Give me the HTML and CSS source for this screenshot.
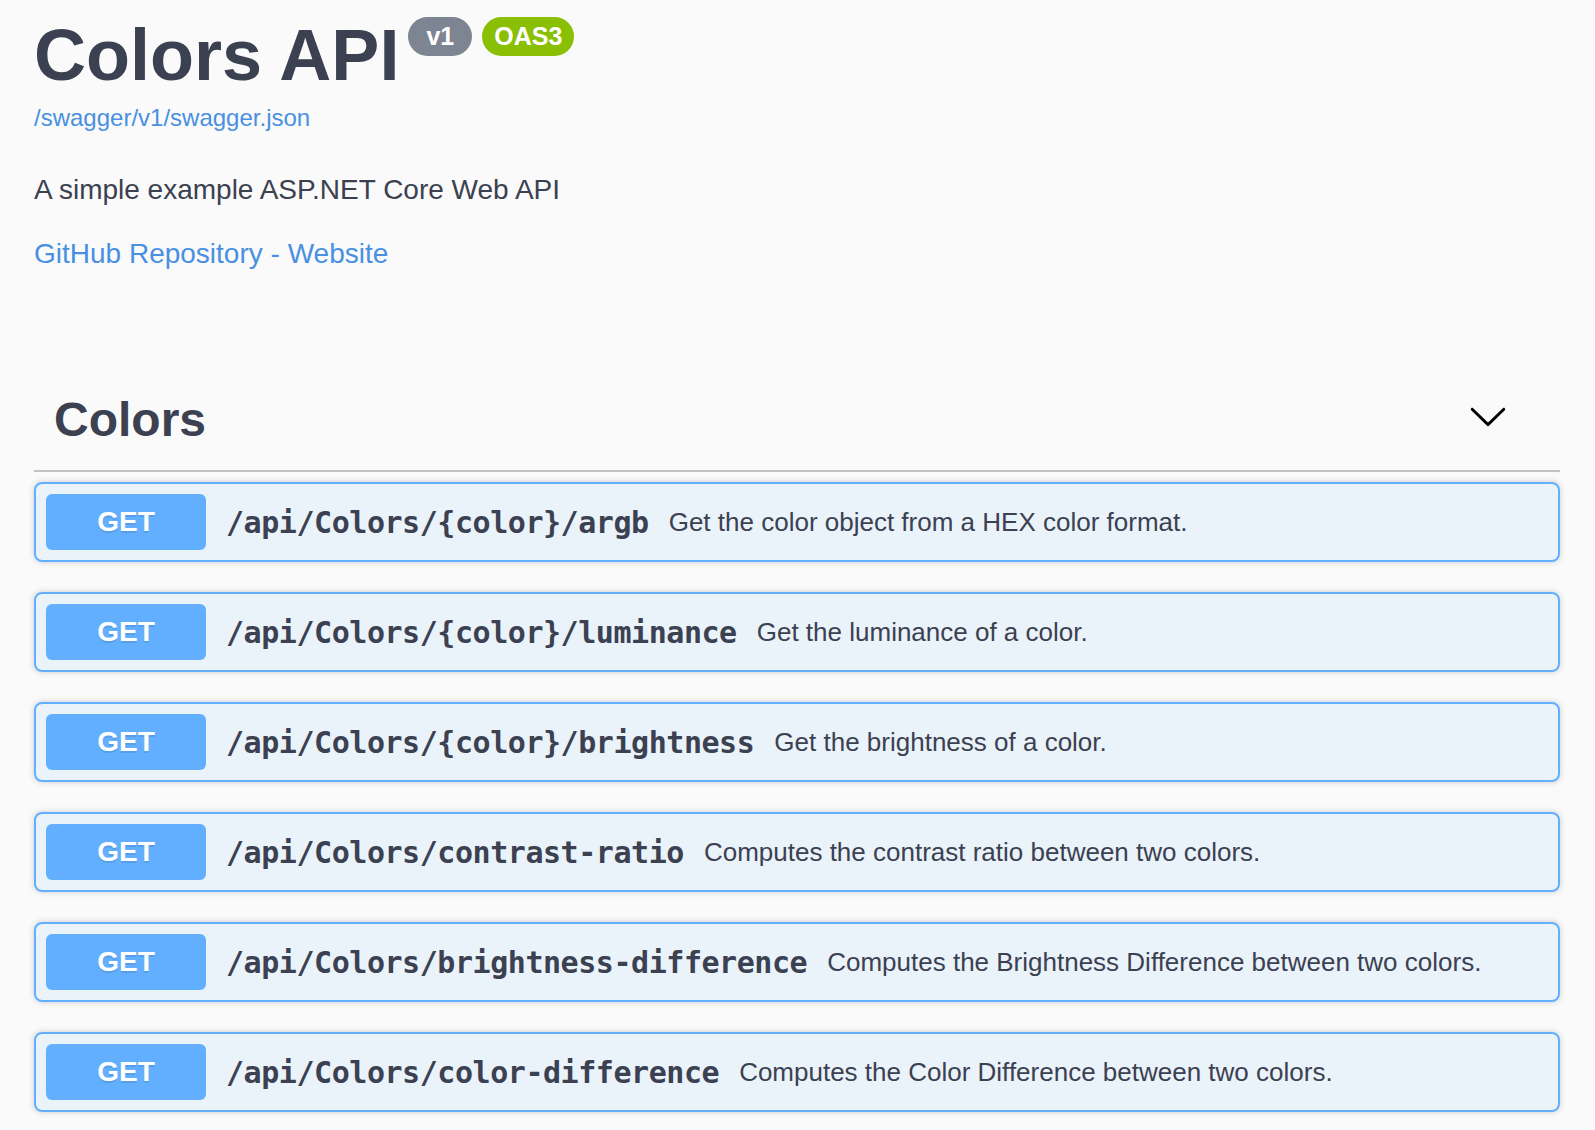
FILE: index.html
```html
<!DOCTYPE html>
<html lang="en">
<head>
<meta charset="utf-8">
<title>Colors API</title>
<link rel="stylesheet" href="styles.css">
</head>
<body>
<div class="wrapper">
  <section class="info">
    <div class="title-row">
      <h2 class="title">Colors API</h2>
      <div class="badges">
        <small class="badge badge-version">v1</small>
        <small class="badge badge-oas">OAS3</small>
      </div>
    </div>
    <a class="spec-link" href="#">/swagger/v1/swagger.json</a>
    <p class="description">A simple example ASP.NET Core Web API</p>
    <p class="contact"><a href="#">GitHub Repository - Website</a></p>
  </section>

  <section class="tag-section">
    <div class="opblock-tag">
      <h3 class="tag-name">Colors</h3>
      <button class="expand" type="button" aria-label="collapse">
        <svg viewBox="0 0 20 20" width="40" height="40"><path d="M17.418 6.109c.272-.268.709-.268.979 0s.271.701 0 .969l-7.908 7.830c-.27.268-.707.268-.979 0l-7.908-7.830c-.27-.268-.27-.701 0-.969.271-.268.709-.268.979 0L10 13.250l7.418-7.141z" fill="#000"/></svg>
      </button>
    </div>

    <div class="opblock">
      <span class="method">GET</span>
      <span class="path">/api/Colors/{color}/argb</span>
      <span class="summary">Get the color object from a HEX color format.</span>
    </div>
    <div class="opblock">
      <span class="method">GET</span>
      <span class="path">/api/Colors/{color}/luminance</span>
      <span class="summary">Get the luminance of a color.</span>
    </div>
    <div class="opblock">
      <span class="method">GET</span>
      <span class="path">/api/Colors/{color}/brightness</span>
      <span class="summary">Get the brightness of a color.</span>
    </div>
    <div class="opblock">
      <span class="method">GET</span>
      <span class="path">/api/Colors/contrast-ratio</span>
      <span class="summary">Computes the contrast ratio between two colors.</span>
    </div>
    <div class="opblock">
      <span class="method">GET</span>
      <span class="path">/api/Colors/brightness-difference</span>
      <span class="summary">Computes the Brightness Difference between two colors.</span>
    </div>
    <div class="opblock">
      <span class="method">GET</span>
      <span class="path">/api/Colors/color-difference</span>
      <span class="summary">Computes the Color Difference between two colors.</span>
    </div>
  </section>
</div>
</body>
</html>
```
FILE: styles.css
```css
html, body {
  margin: 0;
  padding: 0;
  background: #fafafa;
}

body {
  font-family: "Liberation Sans", Arial, sans-serif;
  color: #3b4151;
}

.wrapper {
  padding: 14px 35px 0 34px;
}

/* ---------- info ---------- */
.info {
  display: flex;
  flex-direction: column;
  align-items: flex-start;
}

.title-row {
  display: flex;
  align-items: flex-start;
}

.title {
  margin: 0;
  font-size: 72px;
  line-height: 83px;
  font-weight: 700;
  color: #3b4151;
}

.badges {
  display: flex;
  gap: 10px;
  margin: 3px 0 0 9px;
}

.badge {
  display: inline-block;
  height: 39px;
  line-height: 39px;
  border-radius: 20px;
  font-size: 25px;
  font-weight: 700;
  color: #fff;
}

.badge-version {
  background: #7d8492;
  padding: 0 18px;
}

.badge-oas {
  background: #89bf04;
  padding: 0 12px;
}

.spec-link {
  margin-top: 7px;
  font-size: 24px;
  line-height: 28px;
  color: #4990e2;
  text-decoration: none;
}

.description {
  margin: 42px 0 0;
  font-size: 28px;
  line-height: 32px;
  color: #3b4151;
}

.contact {
  margin: 32px 0 0;
  font-size: 28px;
  line-height: 32px;
}

.contact a {
  color: #4990e2;
  text-decoration: none;
}

/* ---------- tag ---------- */
.tag-section {
  margin-top: 102px;
}

.opblock-tag {
  display: flex;
  align-items: center;
  padding: 20px 52px 22px 20px;
  border-bottom: 2px solid rgba(59, 65, 81, 0.3);
  margin-bottom: 10px;
}

.tag-name {
  flex: 1 1 auto;
  margin: 0;
  font-size: 48px;
  line-height: 56px;
  font-weight: 700;
  color: #3b4151;
}

.expand {
  display: flex;
  padding: 0;
  margin: 0 0 8px;
  border: none;
  background: none;
}

.expand svg {
  display: block;
  width: 40px;
  height: 40px;
}

/* ---------- operations ---------- */
.opblock {
  display: flex;
  align-items: center;
  padding: 10px;
  margin-bottom: 30px;
  border: 2px solid #61affe;
  border-radius: 8px;
  background: rgba(97, 175, 254, 0.1);
  box-shadow: 0 0 6px rgba(0, 0, 0, 0.19);
}

.method {
  min-width: 160px;
  padding: 12px 0;
  font-size: 28px;
  line-height: 32px;
  font-weight: 700;
  text-align: center;
  color: #fff;
  background: #61affe;
  border-radius: 6px;
  text-shadow: 0 2px 0 rgba(0, 0, 0, 0.1);
}

.path {
  padding: 0 20px;
  font-family: "DejaVu Sans Mono", "Liberation Mono", monospace;
  font-size: 30px;
  letter-spacing: -0.45px;
  font-weight: 700;
  color: #3b4151;
  white-space: nowrap;
}

.summary {
  flex: 1 1 auto;
  font-size: 26px;
  color: #3b4151;
}
```
